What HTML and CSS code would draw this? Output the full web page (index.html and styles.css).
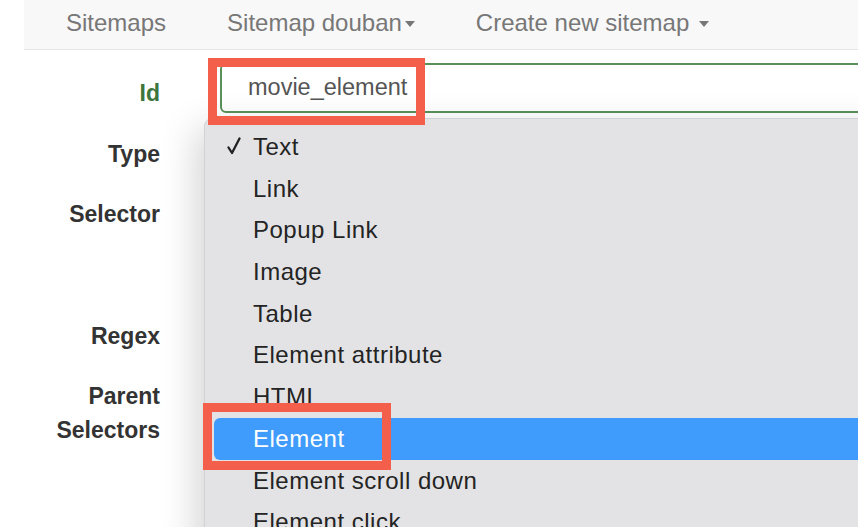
FILE: index.html
```html
<!DOCTYPE html>
<html lang="en">
<head>
    <meta charset="UTF-8">
    <meta name="viewport" content="width=device-width, initial-scale=1.0">
    <title>Sitemap douban - Selector</title>
    <link rel="stylesheet" href="styles.css">
</head>
<body>
    <nav class="navbar">
        <ul class="nav-links">
            <li><a href="#">Sitemaps</a></li>
            <li><a href="#">Sitemap douban<span class="caret"></span></a></li>
            <li><a href="#">Create new sitemap <span class="caret"></span></a></li>
        </ul>
    </nav>

    <form class="selector-form">
        <div class="form-row row-id">
            <label class="form-label label-success" for="selectorId">Id</label>
            <input class="form-input input-success" id="selectorId" type="text" value="movie_element">
        </div>
        <div class="form-row row-type">
            <label class="form-label">Type</label>
            <div class="form-field"></div>
        </div>
        <div class="form-row row-selector">
            <label class="form-label">Selector</label>
            <div class="form-field"></div>
        </div>
        <div class="form-row row-regex">
            <label class="form-label">Regex</label>
            <div class="form-field"></div>
        </div>
        <div class="form-row row-parent">
            <label class="form-label label-tall">Parent<br>Selectors</label>
            <div class="form-field"></div>
        </div>
    </form>

    <!-- native select popup, opened over the form -->
    <ul class="type-menu">
        <li class="menu-item checked">
            <svg class="check" width="16" height="18" viewBox="0 0 16 18">
                <path d="M2.5 10.5 L6 16 L13.5 1.5" fill="none" stroke="#222" stroke-width="2.3" stroke-linecap="round" stroke-linejoin="round"/>
            </svg>
            Text
        </li>
        <li class="menu-item">Link</li>
        <li class="menu-item">Popup Link</li>
        <li class="menu-item">Image</li>
        <li class="menu-item">Table</li>
        <li class="menu-item">Element attribute</li>
        <li class="menu-item">HTML</li>
        <li class="menu-item active">Element</li>
        <li class="menu-item">Element scroll down</li>
        <li class="menu-item">Element click</li>
    </ul>

    <!-- annotation boxes -->
    <div class="mark mark-id"></div>
    <div class="mark mark-element"></div>
</body>
</html>
```

FILE: styles.css
```css
html, body {
    margin: 0;
    height: 100%;
    overflow: hidden;
}

body {
    position: relative;
    font-family: "Liberation Sans", Arial, sans-serif;
    background-color: #fff;
    color: #333;
}

.navbar {
    margin-left: 24px;
    height: 49px;
    background-color: #f8f8f8;
    border-bottom: 1px solid #e5e5e5;
}

.nav-links {
    list-style: none;
    margin: 0;
    padding: 0 0 0 42px;
    height: 100%;
    display: flex;
    align-items: center;
    gap: 61px;
}

.nav-links a {
    display: block;
    font-size: 24px;
    line-height: 28px;
    padding-bottom: 4px;
    color: #777;
    text-decoration: none;
}

.caret {
    display: inline-block;
    width: 0;
    height: 0;
    margin-left: 3px;
    vertical-align: middle;
    border-top: 6px solid #777;
    border-left: 5px solid transparent;
    border-right: 5px solid transparent;
}

.selector-form {
    padding-left: 24px;
}

.form-row {
    display: flex;
    align-items: flex-start;
    gap: 60px;
}

.form-label {
    width: 136px;
    flex-shrink: 0;
    text-align: right;
    font-size: 23px;
    font-weight: bold;
    line-height: 28px;
    color: #333;
}

.label-success {
    color: #3c763d;
    padding-top: 16px;
}

.label-tall {
    line-height: 34px;
}

.form-field {
    flex: 1;
}

.row-id {
    margin-top: 13px;
    height: 50px;
}

.row-type {
    margin-top: 27px;
    height: 60px;
}

.row-selector {
    height: 122px;
}

.row-regex {
    height: 57px;
}

.form-input {
    flex: 1;
    margin-right: -40px;
    height: 50px;
    box-sizing: border-box;
    padding: 0 0 2px 26px;
    font-family: "Liberation Sans", Arial, sans-serif;
    font-size: 23.5px;
    color: #555;
    background-color: #fff;
    border-radius: 6px;
    outline: none;
}

.input-success {
    border: 2px solid #5a915a;
}

.type-menu {
    position: absolute;
    left: 204px;
    top: 118px;
    width: 720px;
    height: 460px;
    margin: 0;
    padding: 7px 0 0;
    list-style: none;
    background-color: #e3e3e5;
    border: 1px solid #d2d2d4;
    border-radius: 8px;
    box-shadow: -8px 10px 36px rgba(0, 0, 0, 0.17);
}

.menu-item {
    position: relative;
    height: 41.7px;
    padding-left: 48px;
    font-size: 24px;
    line-height: 41.7px;
    letter-spacing: 0.5px;
    color: #242424;
}

.menu-item .check {
    position: absolute;
    left: 21px;
    top: 11px;
}

.menu-item.active {
    margin: 0 9px;
    padding-left: 39px;
    background-color: #3f9bfc;
    color: #fff;
    border-radius: 6px;
}

.mark {
    position: absolute;
    box-sizing: border-box;
    border: 9px solid #f45f4b;
}

.mark-id {
    left: 208px;
    top: 58px;
    width: 217px;
    height: 67px;
}

.mark-element {
    left: 203px;
    top: 403px;
    width: 188px;
    height: 67px;
}
```
